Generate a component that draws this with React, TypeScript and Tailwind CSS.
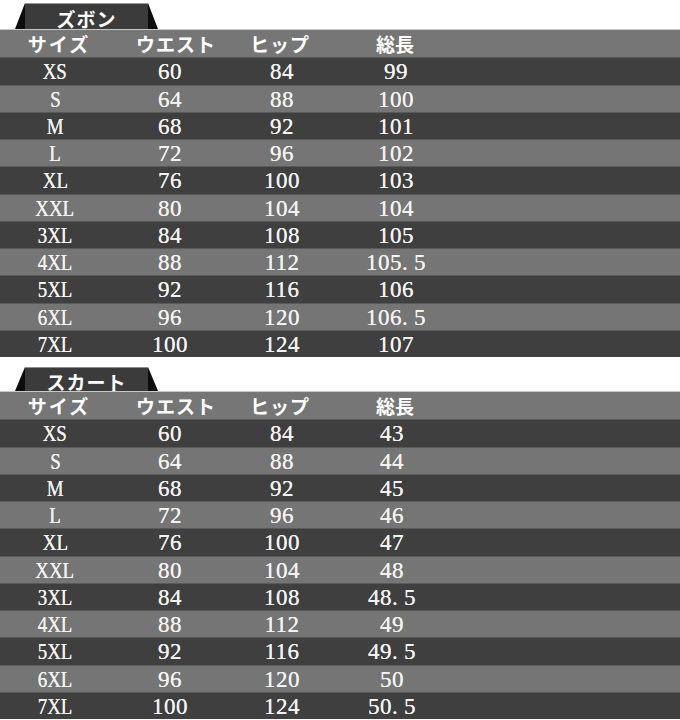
import React from "react";

type Row = [string, string, string, string];

const pants: Row[] = [
  ["XS", "60", "84", "99"],
  ["S", "64", "88", "100"],
  ["M", "68", "92", "101"],
  ["L", "72", "96", "102"],
  ["XL", "76", "100", "103"],
  ["XXL", "80", "104", "104"],
  ["3XL", "84", "108", "105"],
  ["4XL", "88", "112", "105.5"],
  ["5XL", "92", "116", "106"],
  ["6XL", "96", "120", "106.5"],
  ["7XL", "100", "124", "107"],
];

const skirt: Row[] = [
  ["XS", "60", "84", "43"],
  ["S", "64", "88", "44"],
  ["M", "68", "92", "45"],
  ["L", "72", "96", "46"],
  ["XL", "76", "100", "47"],
  ["XXL", "80", "104", "48"],
  ["3XL", "84", "108", "48.5"],
  ["4XL", "88", "112", "49"],
  ["5XL", "92", "116", "49.5"],
  ["6XL", "96", "120", "50"],
  ["7XL", "100", "124", "50.5"],
];

const jp = { fontFamily: '"Noto Sans CJK JP", "Noto Sans", sans-serif' };
const serif = { fontFamily: '"Liberation Serif", "DejaVu Serif", serif' };

// sizes like XS / 3XL are squeezed to look like half-width mincho
function SizeText({ text }: { text: string }) {
  return (
    <span className="inline-block scale-x-[0.82] [text-shadow:0_0_0.6px_#fff]" style={serif}>
      {text}
    </span>
  );
}

// numbers: the decimal point takes a full half-width cell, like "106. 5"
function Num({ text }: { text: string }) {
  const [a, b] = text.split(".");
  return (
    <span className="inline-block tracking-[0.5px] [text-shadow:0_0_0.6px_#fff]" style={serif}>
      {a}
      {b !== undefined && (
        <>
          <span className="inline-block w-[12px] text-left">.</span>
          {b}
        </>
      )}
    </span>
  );
}

function Tab({ label, cls }: { label: string; cls: string }) {
  return (
    <div className={`relative ml-[15px] w-[143px] ${cls}`}>
      <svg className="absolute inset-0 h-full w-full" viewBox="0 0 143 26" preserveAspectRatio="none">
        <polygon points="0,26 10,0 133,0 143,26" fill="#0d0d0d" />
        <polygon points="10,1 133,1 133,26 10,26" fill="#3b3b3b" />
        <line x1="10" y1="0.5" x2="133" y2="0.5" stroke="#9a9a9a" strokeWidth="1" />
      </svg>
      <div className="relative flex h-full items-center justify-center pt-[4px] text-[19px] font-bold leading-[19px] tracking-[1px] text-white" style={jp}>
        {label}
      </div>
    </div>
  );
}

function SizeTable({ rows, grid, lenPad }: { rows: Row[]; grid: string; lenPad: string }) {
  return (
    <div className="w-full border-t border-[#c8c8c8]">
      <div className={`grid h-[27.25px] items-center bg-[#767676] text-[19px] font-bold leading-none text-white ${grid}`} style={jp}>
        <div className="pl-[8px] text-center tracking-[2px]">サイズ</div>
        <div className="pl-[12px] text-center tracking-[1px]">ウエスト</div>
        <div className="pr-[4px] text-center tracking-[1px]">ヒップ</div>
        <div className={`text-center ${lenPad}`}>総長</div>
        <div />
      </div>
      {rows.map((r, i) => (
        <div
          key={r[0]}
          className={`grid h-[27.25px] items-center border-t border-[#5a5a5a] text-[23px] leading-none text-[#f3f3f3] ${grid} ${i % 2 === 0 ? "bg-[#3f3f3f]" : "bg-[#757575]"}`}
        >
          <div className="text-center"><SizeText text={r[0]} /></div>
          <div className="text-center"><Num text={r[1]} /></div>
          <div className="text-center"><Num text={r[2]} /></div>
          <div className="text-center"><Num text={r[3]} /></div>
          <div />
        </div>
      ))}
    </div>
  );
}

export default function App() {
  return (
    <div className="h-[720px] w-[680px] overflow-hidden bg-white">
      <Tab label="ズボン" cls="mt-[3px] h-[26px]" />
      <SizeTable rows={pants} grid="grid-cols-[110px_120px_104px_124px_1fr]" lenPad="pr-[2px]" />
      <Tab label="スカート" cls="mt-[10px] h-[24px]" />
      <SizeTable rows={skirt} grid="grid-cols-[110px_120px_104px_116px_1fr]" lenPad="pl-[6px]" />
    </div>
  );
}
